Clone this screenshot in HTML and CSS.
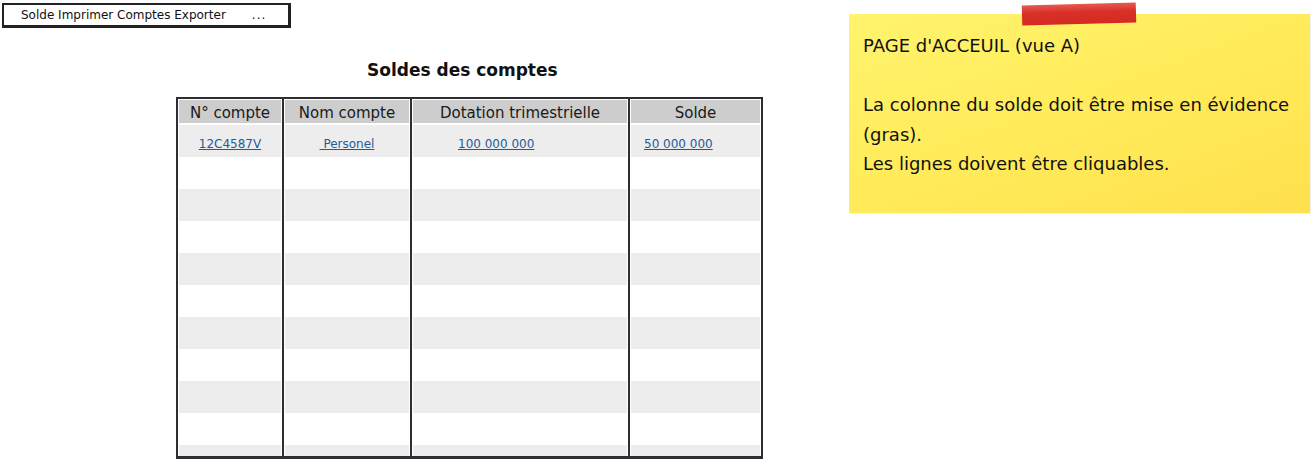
FILE: index.html
```html
<!DOCTYPE html>
<html lang="fr">
<head>
<meta charset="utf-8">
<title>Soldes des comptes</title>
<link rel="stylesheet" href="styles.css">
</head>
<body>
<div class="page">
  <div class="main">
    <nav class="menu">
      <span class="menu-items">Solde Imprimer Comptes Exporter</span>
      <span class="menu-more">...</span>
    </nav>
    <h1 class="title">Soldes des comptes</h1>
    <div class="grid">
      <div class="col col-num">
        <div class="head">N° compte</div>
        <div class="row odd"><a href="#">12C4587V</a></div>
        <div class="row"></div><div class="row odd"></div><div class="row"></div><div class="row odd"></div>
        <div class="row"></div><div class="row odd"></div><div class="row"></div><div class="row odd"></div>
        <div class="row"></div><div class="row odd"></div>
      </div>
      <div class="col col-name">
        <div class="head">Nom compte</div>
        <div class="row odd"><a href="#">&nbsp;Personel</a></div>
        <div class="row"></div><div class="row odd"></div><div class="row"></div><div class="row odd"></div>
        <div class="row"></div><div class="row odd"></div><div class="row"></div><div class="row odd"></div>
        <div class="row"></div><div class="row odd"></div>
      </div>
      <div class="col col-dot">
        <div class="head">Dotation trimestrielle</div>
        <div class="row odd"><a href="#">100 000 000</a></div>
        <div class="row"></div><div class="row odd"></div><div class="row"></div><div class="row odd"></div>
        <div class="row"></div><div class="row odd"></div><div class="row"></div><div class="row odd"></div>
        <div class="row"></div><div class="row odd"></div>
      </div>
      <div class="col col-solde">
        <div class="head">Solde</div>
        <div class="row odd"><a href="#">50 000 000</a></div>
        <div class="row"></div><div class="row odd"></div><div class="row"></div><div class="row odd"></div>
        <div class="row"></div><div class="row odd"></div><div class="row"></div><div class="row odd"></div>
        <div class="row"></div><div class="row odd"></div>
      </div>
    </div>
  </div>
  <aside class="note">
    <div class="tape"></div>
    <p class="note-text">PAGE d'ACCEUIL (vue A)<br><br>La colonne du solde doit être mise en évidence<br>(gras).<br>Les lignes doivent être cliquables.</p>
  </aside>
</div>
</body>
</html>
```
FILE: styles.css
```css
html, body {
  margin: 0;
  padding: 0;
  background: #fff;
}
body {
  font-family: "DejaVu Sans", "Noto Sans", sans-serif;
  color: #111;
  width: 1312px;
  height: 462px;
  overflow: hidden;
}
.page {
  display: flex;
  align-items: flex-start;
}
.main {
  width: 849px;
  flex: none;
}
.menu {
  margin: 3px 0 0 2px;
  width: 284px;
  height: 20px;
  border: 2px solid #222;
  border-right-width: 3px;
  border-bottom-width: 3px;
  display: flex;
  align-items: center;
  font-size: 12px;
  box-sizing: content-box;
}
.menu-items {
  margin-left: 17px;
}
.menu-more {
  margin-left: 26px;
  letter-spacing: 1px;
}
.title {
  margin: 31px 0 0 0;
  padding-left: 367px;
  font-size: 17px;
  font-weight: bold;
  line-height: 22px;
  height: 22px;
  color: #111;
}
.grid {
  margin: 16px 0 0 176px;
  width: 583px;
  height: 357px;
  border: 2px solid #2d2d33;
  border-bottom-width: 3px;
  background: #2d2d33;
  display: grid;
  grid-template-columns: 104px 126px 216px 131px;
  column-gap: 2px;
  overflow: hidden;
}
.col {
  background: #fff;
  padding: 1px 1px 0 1px;
  display: flex;
  flex-direction: column;
  overflow: hidden;
}
.head {
  height: 23px;
  flex: none;
  background: #cdcdcd;
  margin-bottom: 2px;
  text-align: center;
  font-size: 15px;
  line-height: 26px;
  color: #1a1a1a;
}
.row {
  height: 32px;
  flex: none;
  background: #fff;
  font-size: 12px;
  line-height: 38px;
}
.row.odd {
  background: #ededed;
}
.row a {
  color: #1f5b9c;
  text-decoration: underline;
}
.col-num .row, .col-name .row {
  text-align: center;
}
.col-dot .row {
  padding-left: 45px;
}
.col-solde .row {
  padding-left: 13px;
}
.note {
  position: relative;
  margin-top: 14px;
  width: 461px;
  height: 199px;
  flex: none;
  background: linear-gradient(160deg, #fff46e 0%, #ffec5c 45%, #ffe04d 100%);
  box-shadow: 1px 1px 1px rgba(0,0,0,0.05);
}
.tape {
  position: absolute;
  left: 173px;
  top: -10px;
  width: 114px;
  height: 20px;
  background: linear-gradient(180deg, #e55a52 0%, #d93028 40%, #d42a22 100%);
  transform: rotate(-1.5deg);
}
.note-text {
  margin: 0;
  padding: 17px 0 0 14px;
  font-size: 18px;
  line-height: 29.5px;
  color: #111;
}
```
